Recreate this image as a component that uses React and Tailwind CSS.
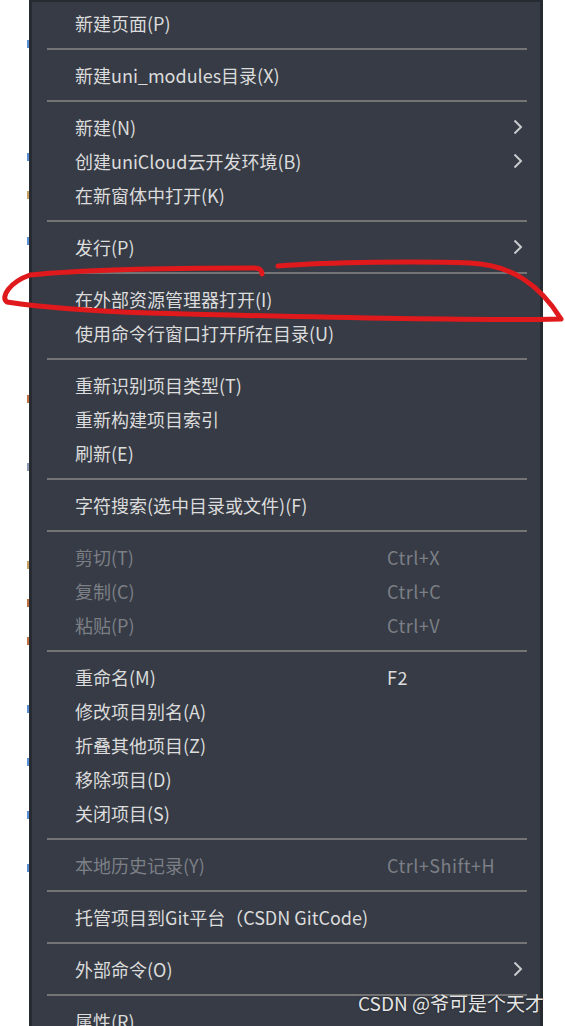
import React from "react";

const font = { fontFamily: '"Microsoft YaHei", "Noto Sans CJK SC", "Noto Sans", sans-serif' };

// menu model: "sep" for a divider, otherwise an item
const items = [
  { label: "新建页面(P)" },
  "sep",
  { label: "新建uni_modules目录(X)" },
  "sep",
  { label: "新建(N)", sub: true },
  { label: "创建uniCloud云开发环境(B)", sub: true },
  { label: "在新窗体中打开(K)" },
  "sep",
  { label: "发行(P)", sub: true },
  "sep",
  { label: "在外部资源管理器打开(I)" },
  { label: "使用命令行窗口打开所在目录(U)" },
  "sep",
  { label: "重新识别项目类型(T)" },
  { label: "重新构建项目索引" },
  { label: "刷新(E)" },
  "sep",
  { label: "字符搜索(选中目录或文件)(F)" },
  "sep",
  { label: "剪切(T)", key: "Ctrl+X", off: true },
  { label: "复制(C)", key: "Ctrl+C", off: true },
  { label: "粘贴(P)", key: "Ctrl+V", off: true },
  "sep",
  { label: "重命名(M)", key: "F2" },
  { label: "修改项目别名(A)" },
  { label: "折叠其他项目(Z)" },
  { label: "移除项目(D)" },
  { label: "关闭项目(S)" },
  "sep",
  { label: "本地历史记录(Y)", key: "Ctrl+Shift+H", off: true },
  "sep",
  { label: "托管项目到Git平台（CSDN GitCode)" },
  "sep",
  { label: "外部命令(O)", sub: true },
  "sep",
  { label: "属性(R)" },
];

function Chevron() {
  return (
    <svg width="10" height="16" viewBox="0 0 10 16" className="ml-auto">
      <polyline points="1.5,1.5 8,8 1.5,14.5" fill="none" stroke="#c9cbce" strokeWidth="2" />
    </svg>
  );
}

function MenuRow({ item }) {
  const color = item.off ? "text-[#7c7f85]" : "text-[#dcdcdc]";
  return (
    <div className={`h-[34px] shrink-0 flex items-center pl-[43px] pr-[17px] text-[18px] ${color}`}>
      <span className="w-[312px] shrink-0 whitespace-nowrap">{item.label}</span>
      {item.key && <span className="whitespace-nowrap tracking-[0.5px]">{item.key}</span>}
      {item.sub && <Chevron />}
    </div>
  );
}

export default function App() {
  // bits of the editor text peeking out behind the menu
  const bits = [
    { mt: "mt-[40px]", c: "bg-[#5a8fd8]" },
    { mt: "mt-[105px]", c: "bg-[#5a8fd8]" },
    { mt: "mt-[30px]", c: "bg-[#c9a060]" },
    { mt: "mt-[38px]", c: "bg-[#5a8fd8]" },
    { mt: "mt-[150px]", c: "bg-[#c07040]" },
    { mt: "mt-[60px]", c: "bg-[#8a9ab0]" },
    { mt: "mt-[90px]", c: "bg-[#c9a060]" },
    { mt: "mt-[30px]", c: "bg-[#c07040]" },
    { mt: "mt-[30px]", c: "bg-[#c07040]" },
    { mt: "mt-[60px]", c: "bg-[#5a8fd8]" },
    { mt: "mt-[45px]", c: "bg-[#5a8fd8]" },
    { mt: "mt-[45px]", c: "bg-[#5a8fd8]" },
    { mt: "mt-[45px]", c: "bg-[#5a8fd8]" },
  ];

  return (
    <div className="relative w-[565px] h-[1026px] overflow-hidden bg-white flex" style={font}>
      <div className="w-[29px] shrink-0 flex flex-col items-end">
        {bits.map((b, i) => (
          <div key={i} className={`${b.mt} w-[2px] h-[8px] ${b.c}`} />
        ))}
      </div>

      <div className="w-[514px] shrink-0 h-[1060px] bg-[#363b45] border-l-[3px] border-r-[3px] border-t-2 border-[#262a31] pt-[4px] flex flex-col">
        {items.map((it, i) =>
          it === "sep" ? (
            <div key={i} className="h-[18px] shrink-0 flex items-center ml-[15px] mr-[13px]">
              <div className="h-[2px] w-full bg-[#747474]" />
            </div>
          ) : (
            <MenuRow key={i} item={it} />
          )
        )}
      </div>

      <div className="flex-1" />

      {/* red marker circling the item */}
      <svg className="absolute left-0 top-0 pointer-events-none" width="565" height="1026">
        <path
          d="M278 266 C330 262 420 261 470 263 C512 265 540 285 561 319 C480 321 300 317 150 313 C90 311 40 307 7 302 C0 297 10 282 30 275 C80 270 180 268 254 268 C260 268 262 270 262 274"
          fill="none"
          stroke="#e0191c"
          strokeWidth="5"
          strokeLinecap="round"
          strokeLinejoin="round"
        />
      </svg>

      <div className="absolute left-[358px] top-[989px] text-[19px] text-[#e6e6e6] whitespace-nowrap [text-shadow:0_0_2px_rgba(0,0,0,0.6)]">
        CSDN @爷可是个天才
      </div>
    </div>
  );
}
